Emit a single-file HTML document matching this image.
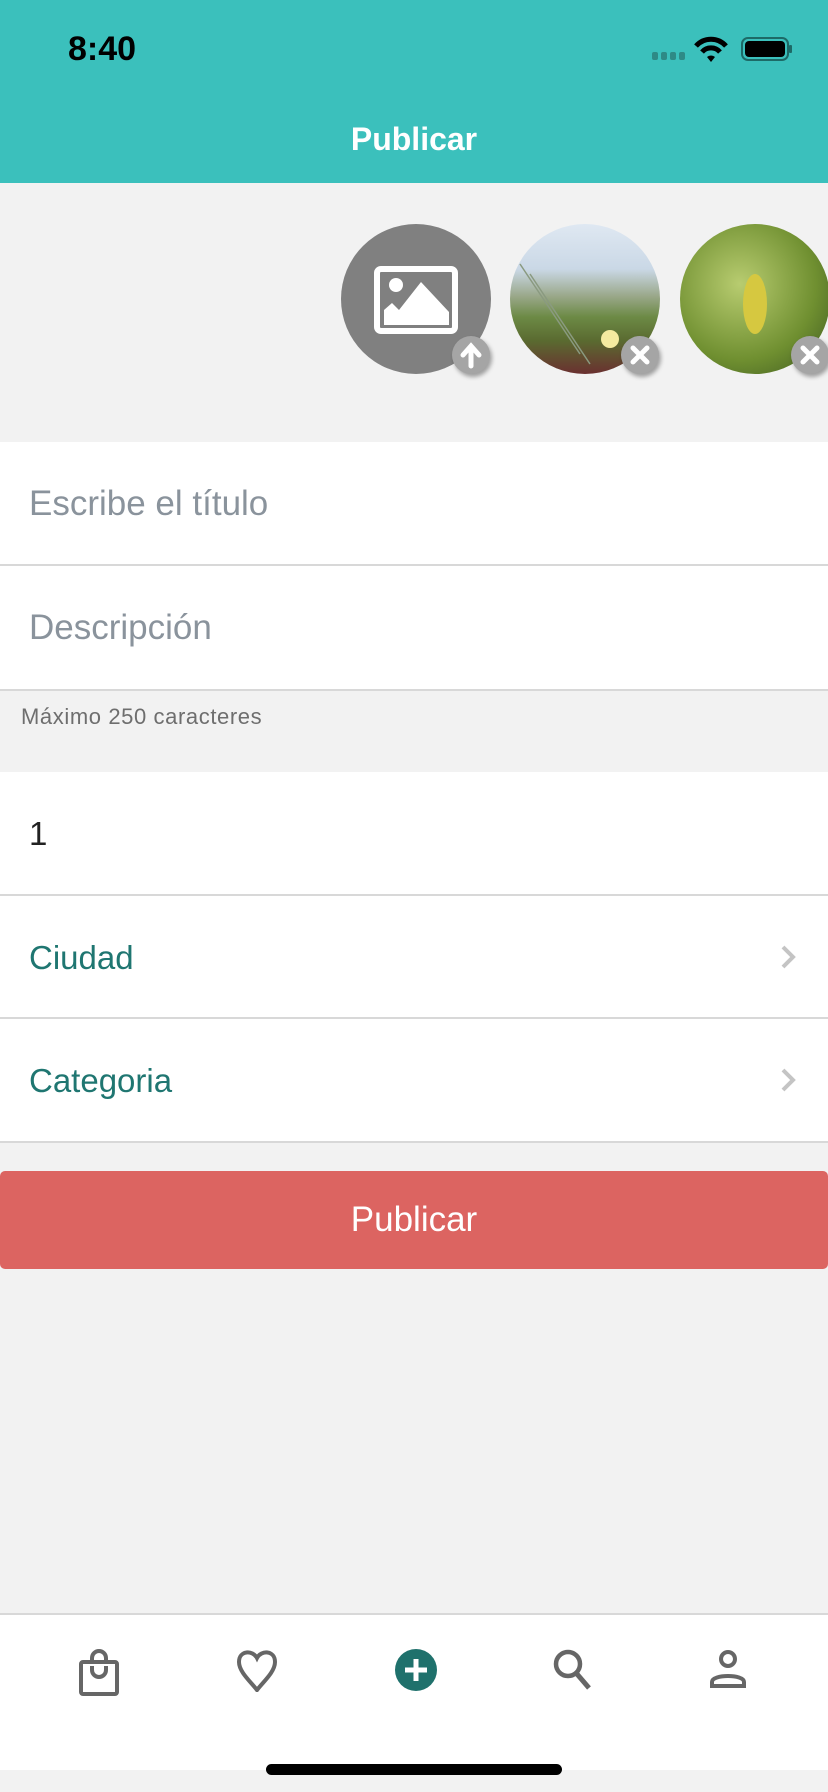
<!DOCTYPE html>
<html><head><meta charset="utf-8"><style>
*{margin:0;padding:0;box-sizing:border-box}
body{width:828px;height:1792px;background:#f2f2f2;font-family:"Liberation Sans",sans-serif;position:relative;overflow:hidden}
.hdr{position:absolute;left:0;top:0;width:828px;height:183px;background:#3bc0bc}
.time{position:absolute;left:68px;top:30px;font-size:34px;font-weight:bold;color:#000}
.title{position:absolute;left:0;width:828px;top:121px;text-align:center;color:#fff;font-size:32px;font-weight:bold}
.circ{position:absolute;width:150px;height:150px;border-radius:50%;top:224px;overflow:hidden}
.badge{position:absolute;width:38px;height:38px;border-radius:50%;background:#a5a5a5;top:336px;box-shadow:2px 3px 4px rgba(0,0,0,.35)}
.row{position:absolute;left:0;width:828px;background:#fff;border-bottom:2px solid #d8d8d8}
.row span{position:absolute;left:29px;font-size:33px}
.chev{position:absolute;right:32px;top:50%;margin-top:-13px}
.btn{position:absolute;left:0;top:1171px;width:828px;height:98px;background:#dc6461;border-radius:5px;color:#fff;font-size:35px;text-align:center;line-height:98px}
.tab{position:absolute;left:0;top:1613px;width:828px;height:157px;background:#fff;border-top:2px solid #d8d8d8}
.ic{position:absolute;top:1648px}
</style></head><body>
<div class="hdr">
<div class="time">8:40</div>
<svg style="position:absolute;left:652px;top:34px" width="140" height="30" viewBox="0 0 140 30">
<g fill="#2e8a86"><rect x="0" y="18" width="6" height="8" rx="2"/><rect x="9" y="18" width="6" height="8" rx="2"/><rect x="18" y="18" width="6" height="8" rx="2"/><rect x="27" y="18" width="6" height="8" rx="2"/></g>
<path d="M44 12 A20 20 0 0 1 74 12" stroke="#000" stroke-width="5" fill="none"/>
<path d="M50 18 A12 12 0 0 1 68 18" stroke="#000" stroke-width="5" fill="none"/>
<path d="M55 23 L59 28 L63 23 A6 6 0 0 0 55 23Z" fill="#000"/>
<rect x="90" y="4" width="46" height="22" rx="6" fill="none" stroke="#1d6a67" stroke-width="2"/>
<rect x="93" y="7" width="40" height="16" rx="4" fill="#000"/>
<rect x="137" y="11" width="3" height="8" rx="1" fill="#1d6a67"/>
</svg>
<div class="title">Publicar</div>
</div>

<div class="circ" style="left:341px;background:#808080">
<svg width="150" height="150" viewBox="0 0 150 150"><rect x="36" y="45" width="78" height="62" rx="4" fill="none" stroke="#fff" stroke-width="6"/><circle cx="55" cy="61" r="7" fill="#fff"/><path d="M43 101 V86 L51 79 L58 86 L80 58 L108 88 V101Z" fill="#fff"/></svg>
</div>
<div class="badge" style="left:452px"><svg width="38" height="38" viewBox="0 0 38 38"><path d="M19 30 V12 M11 19 L19 10 L27 19" stroke="#fff" stroke-width="5" fill="none" stroke-linecap="round"/></svg></div>

<div class="circ" style="left:510px;background:linear-gradient(#dfe8f2 0%,#cad8e6 30%,#9aa88a 48%,#6c8a45 62%,#5a6a30 78%,#6a3030 100%)">
<svg width="150" height="150"><path d="M10 40 L70 130 M20 50 L80 140" stroke="#8a9a80" stroke-width="1.5"/><circle cx="100" cy="115" r="9" fill="#f4eaa0"/></svg>
</div>
<div class="badge" style="left:621px"><svg width="38" height="38" viewBox="0 0 38 38"><path d="M12 12 L26 26 M26 12 L12 26" stroke="#fff" stroke-width="5" stroke-linecap="round"/></svg></div>

<div class="circ" style="left:680px;background:radial-gradient(circle at 40% 40%,#b8cc70,#6f8f30 60%,#3a5520 100%)">
<svg width="150" height="150"><ellipse cx="75" cy="80" rx="12" ry="30" fill="#d6c840"/></svg>
</div>
<div class="badge" style="left:791px"><svg width="38" height="38" viewBox="0 0 38 38"><path d="M12 12 L26 26 M26 12 L12 26" stroke="#fff" stroke-width="5" stroke-linecap="round"/></svg></div>

<div class="row" style="top:442px;height:124px"><span style="top:42px;color:#8a939c;font-size:35px">Escribe el título</span></div>
<div class="row" style="top:566px;height:125px"><span style="top:42px;color:#8a939c;font-size:35px">Descripción</span></div>
<div style="position:absolute;left:21px;top:704px;font-size:22px;letter-spacing:0.6px;color:#6e6e6e">Máximo 250 caracteres</div>

<div class="row" style="top:772px;height:124px"><span style="top:43px;color:#222">1</span></div>
<div class="row" style="top:896px;height:123px"><span style="top:43px;color:#1f7671">Ciudad</span>
<svg class="chev" width="16" height="26" viewBox="0 0 16 26"><path d="M3 3 L13 13 L3 23" stroke="#c4c4c4" stroke-width="4" fill="none"/></svg></div>
<div class="row" style="top:1019px;height:124px"><span style="top:43px;color:#1f7671">Categoria</span>
<svg class="chev" width="16" height="26" viewBox="0 0 16 26"><path d="M3 3 L13 13 L3 23" stroke="#c4c4c4" stroke-width="4" fill="none"/></svg></div>

<div class="btn">Publicar</div>

<div class="tab"></div>
<svg class="ic" style="left:78px" width="42" height="48" viewBox="0 0 42 48"><rect x="3" y="14" width="36" height="32" rx="2" fill="none" stroke="#666" stroke-width="4"/><path d="M14 14 V10 A7 7 0 0 1 28 10 V14 M14 18 V22 A7 7 0 0 0 28 22 V18" stroke="#666" stroke-width="4" fill="none"/></svg>
<svg class="ic" style="left:235px" width="44" height="44" viewBox="0 0 44 44"><path d="M22 10 C18 2 4 2 4 14 C4 24 16 34 22 42 C28 34 40 24 40 14 C40 2 26 2 22 10Z" stroke="#666" stroke-width="4" fill="none"/></svg>
<svg class="ic" style="left:394px" width="44" height="44" viewBox="0 0 44 44"><circle cx="22" cy="22" r="21" fill="#1f716c"/><path d="M22 11 V33 M11 22 H33" stroke="#fff" stroke-width="5"/></svg>
<svg class="ic" style="left:552px" width="42" height="44" viewBox="0 0 42 44"><circle cx="16" cy="16" r="12" fill="none" stroke="#666" stroke-width="4.5"/><path d="M25 26 L37 40" stroke="#666" stroke-width="5"/></svg>
<svg class="ic" style="left:709px" width="38" height="44" viewBox="0 0 38 44"><circle cx="19" cy="11" r="7" fill="none" stroke="#666" stroke-width="4"/><path d="M3 38 V34 C3 26 35 26 35 34 V38Z" fill="none" stroke="#666" stroke-width="4"/></svg>

<div style="position:absolute;left:266px;top:1764px;width:296px;height:11px;border-radius:6px;background:#000"></div>
</body></html>
